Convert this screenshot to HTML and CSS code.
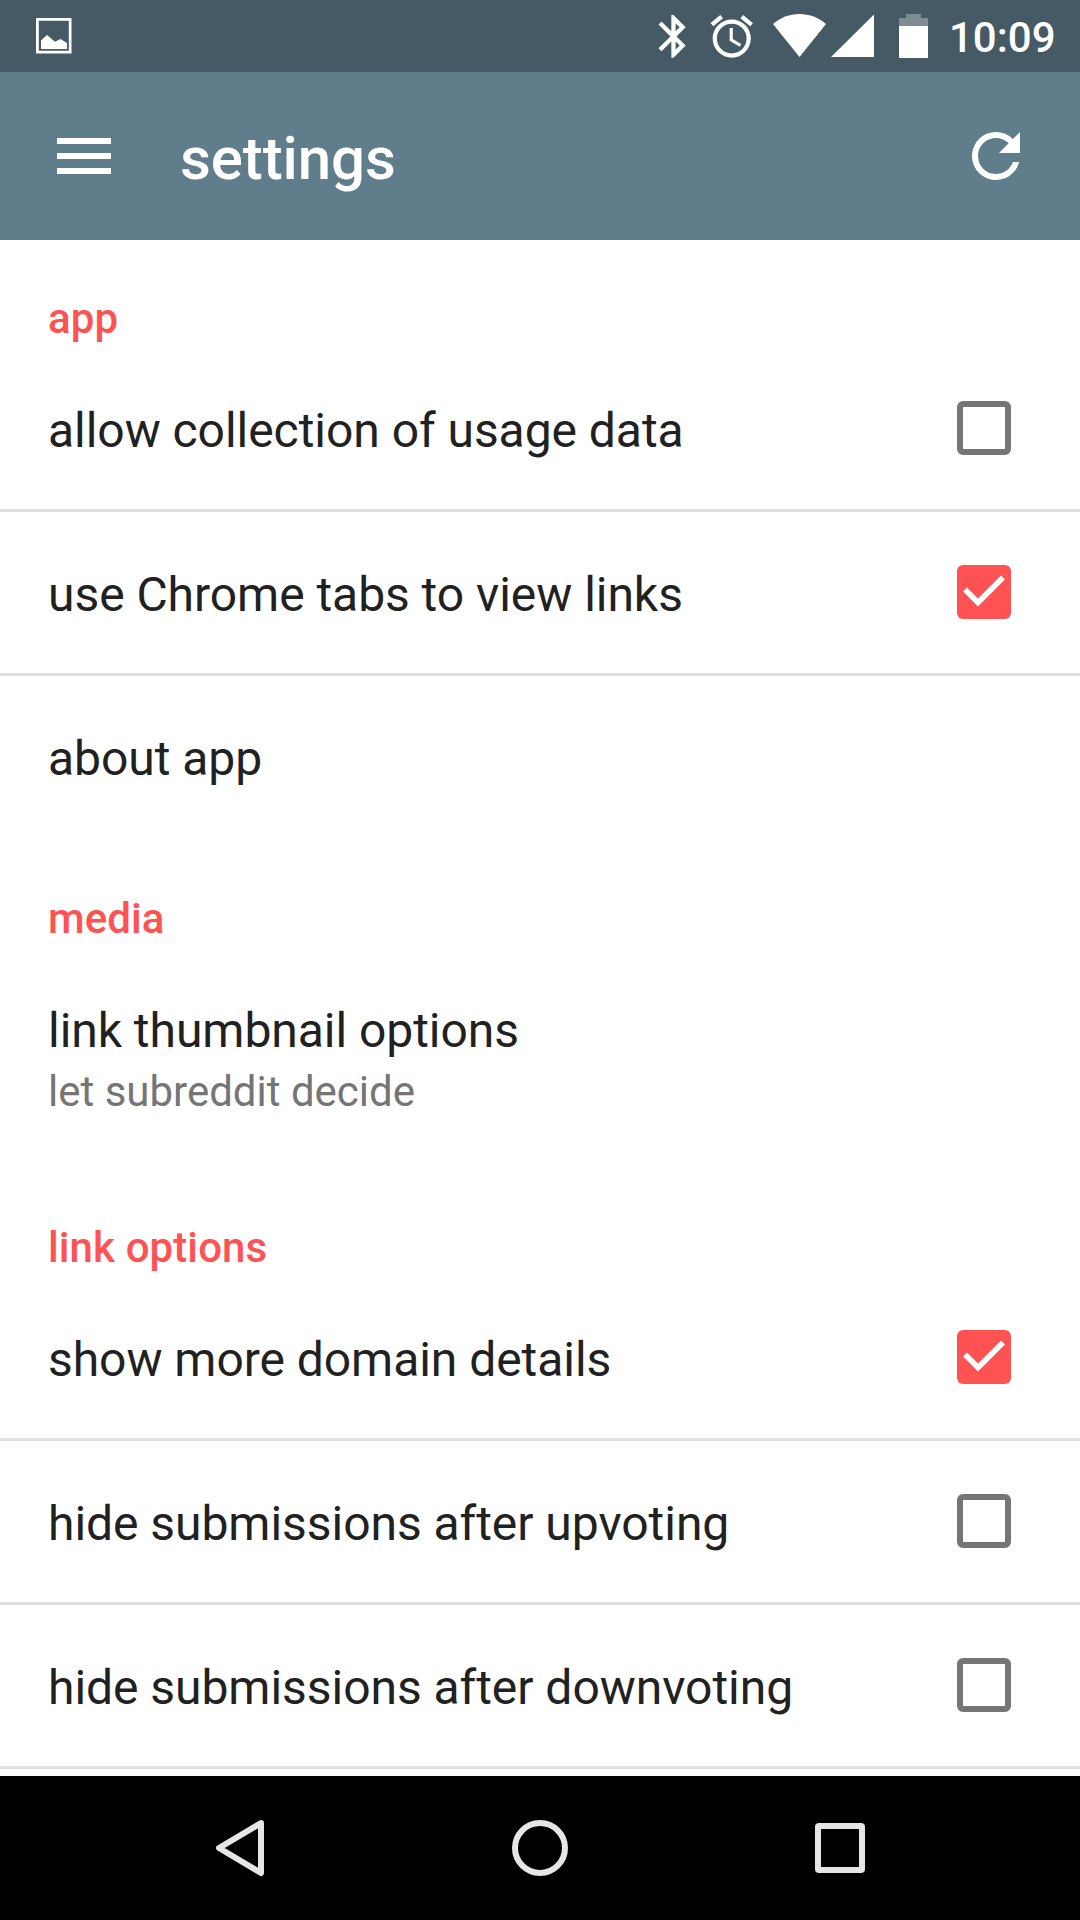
FILE: index.html
```html
<!DOCTYPE html>
<html lang="en">
<head>
<meta charset="utf-8">
<title>settings</title>
<link rel="stylesheet" href="styles.css">
</head>
<body>
<div class="screen">
  <header class="status-bar">
    <svg class="status-icon picture" viewBox="0 0 36 72"><path fill-rule="evenodd" d="M0 18h35.500v35.500H0zM2.800 20.800v30h30v-30z"/><path d="M5 49V40.500L11 35l8 6.700 5.500-2.700 6.500 4V49z"/></svg>
    <div class="status-right">
      <svg class="status-icon bluetooth" viewBox="0 0 28 72"><path transform="translate(-10.200 10.700) scale(2.140)" d="M17.710 7.710L12 2h-1v7.590L6.410 5 5 6.410 10.590 12 5 17.590 6.410 19 11 14.410V22h1l5.710-5.710-4.300-4.290zM13 5.830l1.880 1.880L13 9.590zM14.880 16.290L13 18.170v-3.760z"/></svg>
      <svg class="status-icon alarm" viewBox="0 0 44 72"><path transform="translate(-3.700 11) scale(2.120)" d="M22 5.720l-4.600-3.860-1.290 1.530 4.600 3.860zM7.880 3.390L6.600 1.860 2 5.710l1.290 1.530zM12.500 8H11v6l4.750 2.850.75-1.230-4-2.370zM12 4a9 9 0 1 0 0 18 9 9 0 0 0 0-18zm0 16a7 7 0 1 1 0-14 7 7 0 0 1 0 14z"/></svg>
      <svg class="status-icon wifi" viewBox="0 0 54 72"><path d="M27.500 57L1 24C8.500 17.500 17.500 14 27.500 14s19 3.500 26.500 10z"/></svg>
      <svg class="status-icon signal" viewBox="0 0 43 72"><path d="M0 57L43 14.500V57z"/></svg>
      <svg class="status-icon battery" viewBox="0 0 29 72"><path class="battery-empty" d="M0 18h7v-4h15v4h7v8H0z"/><path d="M0 26h29v32H0z"/></svg>
      <span class="clock">10:09</span>
    </div>
  </header>
  <div class="app-bar">
    <svg class="menu" viewBox="0 0 54 36"><path d="M0 0h54v6H0zM0 15h54v6H0zM0 30h54v6H0z"/></svg>
    <h1 class="title">settings</h1>
    <svg class="refresh" viewBox="0 0 24 24"><path d="M17.650 6.350A7.960 7.960 0 0 0 12 4a8 8 0 1 0 7.730 10h-2.080A6 6 0 1 1 12 6c1.660 0 3.140.69 4.220 1.780L13 11h7V4z"/></svg>
  </div>
  <main class="content">
    <section class="group">
      <h2 class="heading">app</h2>
      <div class="row"><span class="label">allow collection of usage data</span><span class="box"></span></div>
      <div class="row"><span class="label">use Chrome tabs to view links</span><span class="box checked"><svg class="tick" viewBox="0 0 54 54"><path d="M8 24.500L21 37.500L46 12.500"/></svg></span></div>
      <div class="row"><span class="label">about app</span></div>
    </section>
    <section class="group">
      <h2 class="heading">media</h2>
      <div class="row tall"><span class="label">link thumbnail options<small class="summary">let subreddit decide</small></span></div>
    </section>
    <section class="group">
      <h2 class="heading">link options</h2>
      <div class="row"><span class="label">show more domain details</span><span class="box checked"><svg class="tick" viewBox="0 0 54 54"><path d="M8 24.500L21 37.500L46 12.500"/></svg></span></div>
      <div class="row"><span class="label">hide submissions after upvoting</span><span class="box"></span></div>
      <div class="row ruled"><span class="label">hide submissions after downvoting</span><span class="box"></span></div>
    </section>
  </main>
  <nav class="nav-bar">
    <svg class="nav-icon" viewBox="0 0 60 60"><path d="M51 5L9 30L51 55z"/></svg>
    <svg class="nav-icon" viewBox="0 0 60 60"><circle cx="30" cy="30" r="25"/></svg>
    <svg class="nav-icon" viewBox="0 0 60 60"><rect x="8" y="8" width="44" height="44" rx="1"/></svg>
  </nav>
</div>
</body>
</html>
```

FILE: styles.css
```css
* { box-sizing: border-box; }

body {
  margin: 0;
  background: #fff;
  color: #212121;
  font-family: Roboto, "Liberation Sans", sans-serif;
}

svg { display: block; flex: none; }

.screen {
  display: flex;
  flex-direction: column;
  width: 1080px;
  height: 1920px;
  overflow: hidden;
}

.status-bar {
  display: flex;
  flex: none;
  justify-content: space-between;
  height: 72px;
  padding: 0 24px 0 36px;
  background: #455a64;
  color: #fff;
  fill: #fff;
}

.status-right { display: flex; }
.status-icon { height: 72px; }
.picture { width: 36px; }
.bluetooth { width: 28px; margin-right: 24px; }
.alarm { width: 44px; margin-right: 18px; }
.wifi { width: 54px; margin-right: 5px; }
.signal { width: 43px; margin-right: 25px; }
.battery { width: 29px; margin-right: 21px; }
.battery-empty { fill-opacity: .3; }

.clock {
  width: 107px;
  font-size: 42px;
  font-weight: 500;
  line-height: 75px;
  white-space: nowrap;
}

.app-bar {
  display: flex;
  flex: none;
  align-items: center;
  height: 168px;
  padding: 0 48px 0 57px;
  background: #607d8b;
  color: #fff;
  fill: #fff;
}

.menu { width: 54px; height: 36px; }

.title {
  flex: 1;
  margin: 0 0 0 69px;
  padding-top: 6px;
  font-size: 60px;
  font-weight: 500;
  letter-spacing: -.1px;
  line-height: 70px;
}

.refresh { width: 72px; height: 72px; }

.content { flex: 1; min-height: 0; overflow: hidden; }

.heading {
  height: 108px;
  margin: 0;
  padding: 54px 48px 0;
  color: #ff5252;
  font-size: 42px;
  font-weight: 500;
  letter-spacing: .1px;
  line-height: 49px;
}

.row {
  display: flex;
  align-items: flex-start;
  justify-content: space-between;
  height: 164px;
  padding: 53px 69px 0 48px;
  border-bottom: 3px solid #e0e0e0;
}

.row:last-child { border-bottom-color: transparent; }
.row.ruled { border-bottom-color: #e0e0e0; }
.row.tall { height: 221px; }

.label {
  padding-top: 2px;
  font-size: 48px;
  letter-spacing: -.045px;
  line-height: 56px;
}

.summary {
  display: block;
  padding-top: 8px;
  color: #757575;
  font-size: 42px;
  letter-spacing: 0;
  line-height: 49px;
}

.box {
  width: 54px;
  height: 54px;
  border: 6px solid #757575;
  border-radius: 6px;
}

.box.checked { border: 0; background: #ff5252; }

.tick {
  width: 54px;
  height: 54px;
  fill: none;
  stroke: #fff;
  stroke-width: 5.5;
}

.nav-bar {
  display: flex;
  flex: none;
  align-items: center;
  justify-content: center;
  gap: 240px;
  height: 144px;
  background: #000;
}

.nav-icon {
  width: 60px;
  height: 60px;
  fill: none;
  stroke: #e6e6e6;
  stroke-width: 6;
  stroke-linejoin: round;
}
```
